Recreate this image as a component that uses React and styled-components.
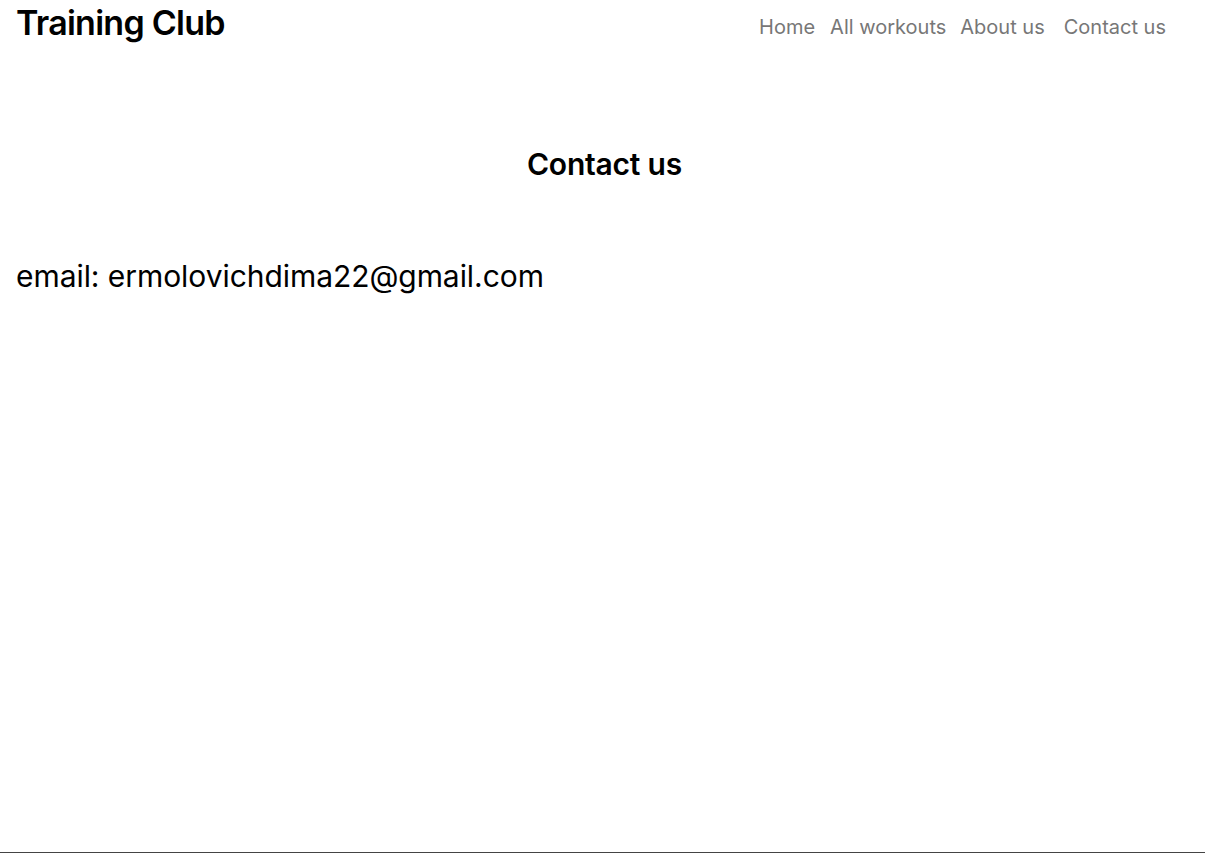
import React from 'react'
import styled, { createGlobalStyle } from 'styled-components'

const GlobalStyle = createGlobalStyle`
	html, body {
		margin: 0;
		padding: 0;
		background: #fff;
		font-family: Inter, "Noto Sans", sans-serif;
	}
`
const Page = styled.div`
	height: 853px;
	display: flex;
	flex-direction: column;
	box-sizing: border-box;
	border-bottom: 1px solid #444;
`
const Header = styled.header`
	display: flex;
	justify-content: space-between;
	align-items: flex-start;
	padding: 0 39px 0 16px;
`
const Logo = styled.h1`
	margin: 0;
	font-size: 34px;
	font-weight: 600;
	line-height: 46px;
	color: #000;
	letter-spacing: -0.75px;
`
const Nav = styled.nav`
	display: flex;
	padding-top: 15px;
`
const NavLink = styled.a`
	font-size: 20px;
	line-height: 24px;
	color: #777;
	text-decoration: none;
	margin-left: ${props => props.gap}px;
`
const Title = styled.h2`
	margin: 100px 0 0;
	padding-left: 4px;
	text-align: center;
	font-size: 30px;
	font-weight: 600;
	line-height: 36px;
	letter-spacing: -0.2px;
`
const Email = styled.p`
	margin: 76px 0 0 16px;
	font-size: 30px;
	line-height: 36px;
	letter-spacing: -0.06px;
`

export default function App() {
	return (
		<>
			<GlobalStyle />
			<Page>
				<Header>
					<Logo>Training Club</Logo>
					<Nav>
						<NavLink gap={0}>Home</NavLink>
						<NavLink gap={15}>All workouts</NavLink>
						<NavLink gap={14}>About us</NavLink>
						<NavLink gap={19}>Contact us</NavLink>
					</Nav>
				</Header>
				<Title>Contact us</Title>
				<Email>email: ermolovichdima22@gmail.com</Email>
			</Page>
		</>
	)
}
